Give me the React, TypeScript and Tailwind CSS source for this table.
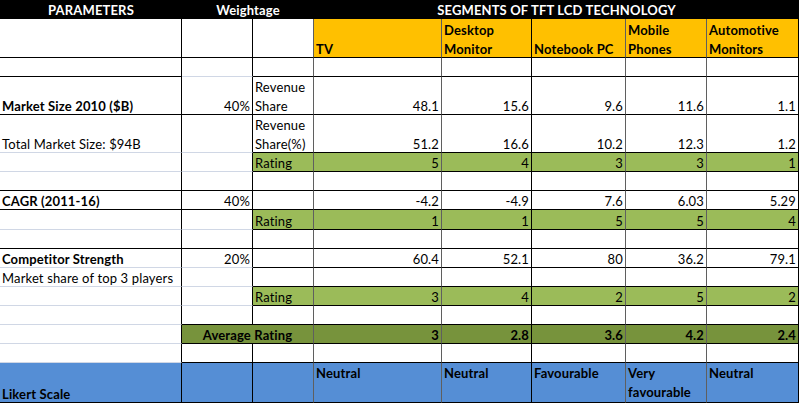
import React from "react";

const BD = "border-b border-b-black";
const BL = "border-b border-b-[#d0d7e5]";
const RD = "border-r border-r-black";
const RG = "border-r border-r-[#5f5f5f]";

const dataR = [RG, RD, RG, RG, RD];

type CellProps = {
  cls?: string;
  children?: React.ReactNode;
};

function C({ cls = "", children }: CellProps) {
  return (
    <div className={"overflow-hidden whitespace-nowrap px-[2px] " + cls}>
      {children !== undefined && children !== "" ? <span className="block -mb-[2px]">{children}</span> : null}
    </div>
  );
}

function DataCells({
  values,
  bg = "",
  bold = false,
  bottom = BD,
}: {
  values: (string | number)[];
  bg?: string;
  bold?: boolean;
  bottom?: string;
}) {
  return (
    <>
      {values.map((v, i) => (
        <C
          key={i}
          cls={`flex items-end justify-end ${bottom} ${dataR[i]} ${bg} ${bold ? "font-bold" : ""}`}
        >
          {v}
        </C>
      ))}
    </>
  );
}

const empty5 = ["", "", "", "", ""];

export default function App() {
  return (
    <div className="w-[800px] h-[404px] bg-white overflow-hidden font-[family-name:Lato,sans-serif] text-[13px] leading-[19px] tracking-[0.15px] text-black">
      <div className="grid grid-cols-[182px_71px_61px_128px_90px_94px_81px_92px] grid-rows-[19px_39px_19px_38px_38px_19px_19px_19px_20px_19px_19px_19px_19px_19px_19px_19px_40px]">
        {/* r0 header */}
        <div className="bg-black text-white font-bold flex items-center justify-center pt-[1px]">PARAMETERS</div>
        <div className="col-span-2 bg-black text-white font-bold flex items-center justify-center pt-[1px]">Weightage</div>
        <div className="col-span-5 bg-black text-white font-bold flex items-center justify-center pt-[1px]">SEGMENTS OF TFT LCD TECHNOLOGY</div>

        {/* r1 yellow */}
        <C cls={`${BD} ${RD}`} />
        <C cls={`${BD} ${RD}`} />
        <C cls={`${BD} ${RG}`} />
        {["TV", "Desktop\nMonitor", "Notebook PC", "Mobile\nPhones", "Automotive\nMonitors"].map((t, i) => (
          <C key={i} cls={`flex items-end bg-[#ffc000] font-bold whitespace-pre ${BD} ${dataR[i]}`}>
            {t}
          </C>
        ))}

        {/* r2 */}
        <C cls={`${BD} ${RD}`} />
        <C cls={`${BL} ${RD}`} />
        <C cls={`${BD} ${RG}`} />
        <DataCells values={empty5} />

        {/* r3 */}
        <C cls={`flex items-end font-bold ${BD} ${RD}`}>Market Size 2010 ($B)</C>
        <C cls={`flex items-end justify-end ${BD} ${RD}`}>40%</C>
        <C cls={`flex items-end whitespace-pre ${BD} ${RG}`}>{"Revenue\nShare"}</C>
        <DataCells values={["48.1", "15.6", "9.6", "11.6", "1.1"]} />

        {/* r4 */}
        <C cls={`flex items-end ${BL} ${RD}`}>Total Market Size: $94B</C>
        <C cls={`${BL} ${RD}`} />
        <C cls={`flex items-end whitespace-pre ${BD} ${RG}`}>{"Revenue\nShare(%)"}</C>
        <DataCells values={["51.2", "16.6", "10.2", "12.3", "1.2"]} />

        {/* r5 rating */}
        <C cls={`${BL} ${RD}`} />
        <C cls={`${BL} ${RD}`} />
        <C cls={`flex items-end bg-[#9bbb59] ${BD} ${RG}`}>Rating</C>
        <DataCells values={["5", "4", "3", "3", "1"]} bg="bg-[#9bbb59]" />

        {/* r6 */}
        <C cls={`${BD} ${RD}`} />
        <C cls={`${BD} ${RD}`} />
        <C cls={`${BD} ${RG}`} />
        <DataCells values={empty5} />

        {/* r7 CAGR */}
        <C cls={`flex items-end font-bold ${BD} ${RD}`}>CAGR (2011-16)</C>
        <C cls={`flex items-end justify-end ${BD} ${RD}`}>40%</C>
        <C cls={`${BD} ${RG}`} />
        <DataCells values={["-4.2", "-4.9", "7.6", "6.03", "5.29"]} />

        {/* r8 rating */}
        <C cls={`${BL} ${RD}`} />
        <C cls={`${BL} ${RD}`} />
        <C cls={`flex items-end bg-[#9bbb59] ${BD} ${RG}`}>Rating</C>
        <DataCells values={["1", "1", "5", "5", "4"]} bg="bg-[#9bbb59]" />

        {/* r9 */}
        <C cls={`${BD} ${RD}`} />
        <C cls={`${BD} ${RD}`} />
        <C cls={`${BD} ${RG}`} />
        <DataCells values={empty5} />

        {/* r10 competitor */}
        <C cls={`flex items-end font-bold ${BL} ${RD}`}>Competitor Strength</C>
        <C cls={`flex items-end justify-end ${BL} ${RD}`}>20%</C>
        <C cls={`${BD} ${RG}`} />
        <DataCells values={["60.4", "52.1", "80", "36.2", "79.1"]} />

        {/* r11 */}
        <C cls={`flex items-end ${BL} ${RD}`}>Market share of top 3 players</C>
        <C cls={`${BL} ${RD}`} />
        <C cls={`${BD} ${RG}`} />
        <DataCells values={empty5} />

        {/* r12 rating */}
        <C cls={`${BL} ${RD}`} />
        <C cls={`${BL} ${RD}`} />
        <C cls={`flex items-end bg-[#9bbb59] ${BD} ${RG}`}>Rating</C>
        <DataCells values={["3", "4", "2", "5", "2"]} bg="bg-[#9bbb59]" />

        {/* r13 */}
        <C cls={`${BL} ${RD}`} />
        <C cls={`${BD} ${RD}`} />
        <C cls={`${BD} ${RG}`} />
        <DataCells values={empty5} />

        {/* r14 average */}
        <C cls={`${BL} ${RD}`} />
        <C cls={`col-span-2 flex items-end justify-center bg-[#77933c] font-bold ${BD} ${RG}`}>Average Rating</C>
        <DataCells values={["3", "2.8", "3.6", "4.2", "2.4"]} bg="bg-[#77933c]" bold />

        {/* r15 */}
        <C cls={`${BL} ${RD}`} />
        <C cls={`${BD} ${RD}`} />
        <C cls={`${BD} ${RG}`} />
        <DataCells values={empty5} />

        {/* r16 likert */}
        <C cls={`flex items-end bg-[#558ed5] font-bold ${BD} ${RD}`}>Likert Scale</C>
        <C cls={`bg-[#558ed5] ${BD} ${RD}`} />
        <C cls={`bg-[#558ed5] ${BD} ${RG}`} />
        {["Neutral", "Neutral", "Favourable", "Very\nfavourable", "Neutral"].map((t, i) => (
          <C key={i} cls={`bg-[#558ed5] font-bold whitespace-pre pt-[1px] ${BD} ${dataR[i]}`}>
            {t}
          </C>
        ))}
      </div>
    </div>
  );
}
